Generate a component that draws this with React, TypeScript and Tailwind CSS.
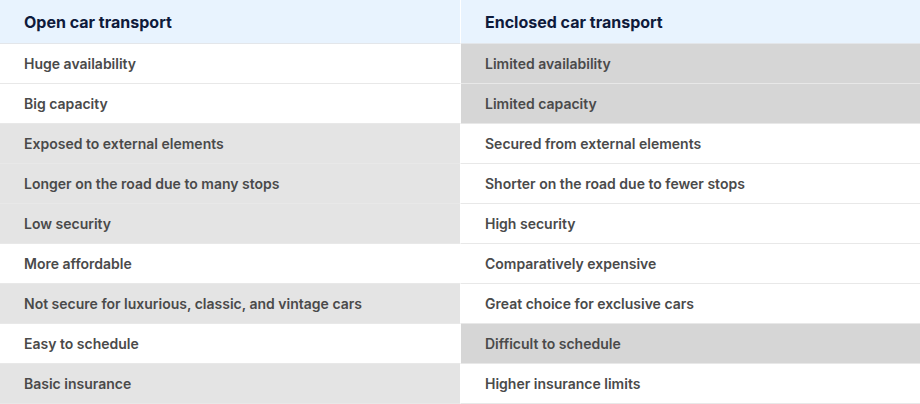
const rows: [string, boolean, string, boolean][] = [
  ["Huge availability", false, "Limited availability", true],
  ["Big capacity", false, "Limited capacity", true],
  ["Exposed to external elements", true, "Secured from external elements", false],
  ["Longer on the road due to many stops", true, "Shorter on the road due to fewer stops", false],
  ["Low security", true, "High security", false],
  ["More affordable", false, "Comparatively expensive", false],
  ["Not secure for luxurious, classic, and vintage cars", true, "Great choice for exclusive cars", false],
  ["Easy to schedule", false, "Difficult to schedule", true],
  ["Basic insurance", true, "Higher insurance limits", false],
];

export default function App() {
  return (
    <div
      className="w-[920px] h-[404px] bg-white overflow-hidden"
      style={{ fontFamily: "Inter, 'Liberation Sans', sans-serif" }}
    >
      <div className="grid grid-cols-[461px_1fr]">
        <div className="h-[44px] bg-[#e8f3fe] border-b border-[#e3e6ea] border-r border-r-white flex items-center pl-6 text-[16px] font-bold text-[#0e1a3b]">
          Open car transport
        </div>
        <div className="h-[44px] bg-[#e8f3fe] border-b border-[#e3e6ea] flex items-center pl-6 text-[16px] font-bold text-[#0e1a3b]">
          Enclosed car transport
        </div>
        {rows.map(([l, lg, r, rg], i) => (
          <>
            <div
              key={"l" + i}
              className={`h-[40px] border-b border-[#e8e8e8] border-r border-r-white flex items-center pl-6 text-[14px] font-semibold text-[#4a4a4a] ${
                lg ? "bg-[#e4e4e4]" : "bg-white"
              }`}
            >
              {l}
            </div>
            <div
              key={"r" + i}
              className={`h-[40px] border-b border-[#e8e8e8] flex items-center pl-6 text-[14px] font-semibold text-[#4a4a4a] ${
                rg ? "bg-[#d6d6d6]" : "bg-white"
              }`}
            >
              {r}
            </div>
          </>
        ))}
      </div>
    </div>
  );
}
